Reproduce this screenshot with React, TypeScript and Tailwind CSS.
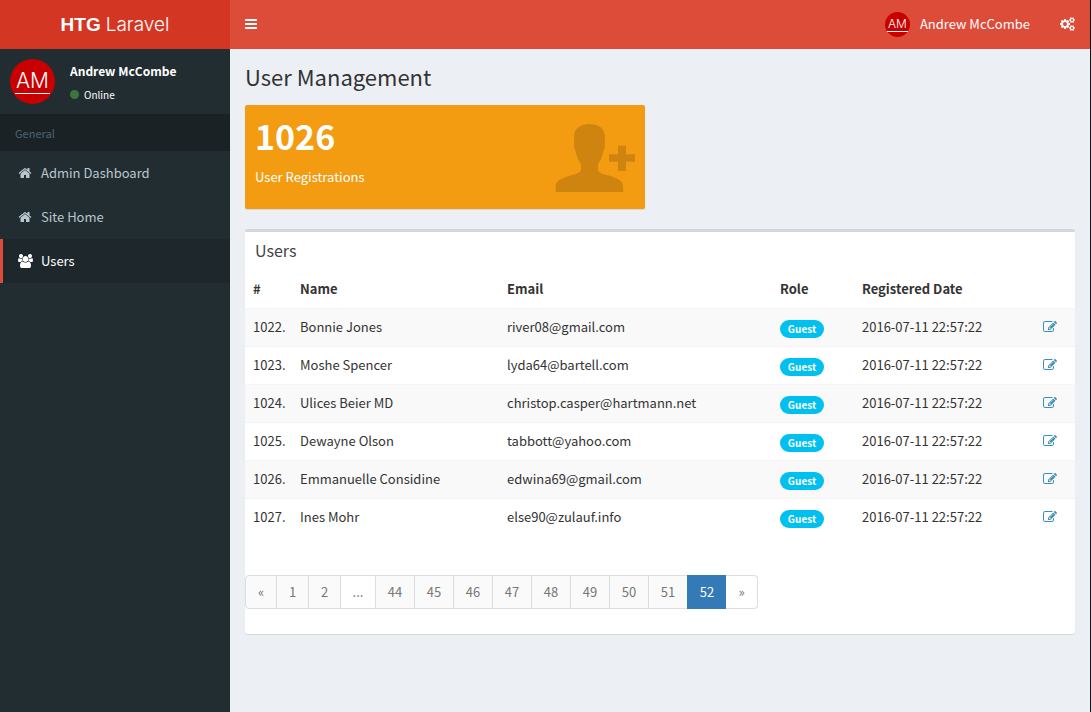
import React from "react";

const ICONS = {
  bars: {
    box: "128 0 1536 1792",
    d: "M1664 1344v128q0 26-19 45t-45 19h-1408q-26 0-45-19t-19-45v-128q0-26 19-45t45-19h1408q26 0 45 19t19 45zm0-512v128q0 26-19 45t-45 19h-1408q-26 0-45-19t-19-45v-128q0-26 19-45t45-19h1408q26 0 45 19t19 45zm0-512v128q0 26-19 45t-45 19h-1408q-26 0-45-19t-19-45v-128q0-26 19-45t45-19h1408q26 0 45 19t19 45z",
  },
  home: {
    box: "0 0 1792 1792",
    d: "M1472 992v480q0 26-19 45t-45 19h-384v-384h-256v384h-384q-26 0-45-19t-19-45v-480q0-1 .5-3t.5-3l575-474 575 474q1 2 1 6zm223-69l-62 74q-8 9-21 11h-3q-13 0-21-7l-692-577-692 577q-12 8-24 7-13-2-21-11l-62-74q-8-10-7-23.5t11-21.5l719-599q32-26 76-26t76 26l244 204v-195q0-14 9-23t23-9h192q14 0 23 9t9 23v408l219 182q10 8 11 21.5t-7 23.5z",
  },
  users: {
    box: "-64 0 1920 1792",
    d: "M529 896q-162 5-265 128h-134q-82 0-138-40.5t-56-118.5q0-353 124-353 6 0 43.5 21t97.5 42.5 119 21.5q67 0 133-23-5 37-5 66 0 139 81 256zm1071 637q0 120-73 189.5t-194 69.5h-874q-121 0-194-69.5t-73-189.5q0-53 3.5-103.5t14-109 26.5-108.5 43-97.5 62-81 85.5-53.5 111.5-20q10 0 43 21.5t73 48 107 48 135 21.5 135-21.5 107-48 73-48 43-21.5q61 0 111.5 20t85.5 53.5 62 81 43 97.5 26.5 108.5 14 109 3.5 103.5zm-1024-1277q0 106-75 181t-181 75-181-75-75-181 75-181 181-75 181 75 75 181zm704 384q0 159-112.5 271.5t-271.5 112.5-271.5-112.5-112.5-271.5 112.5-271.5 271.5-112.5 271.5 112.5 112.5 271.5zm576 225q0 78-56 118.5t-138 40.5h-134q-103-123-265-128 81-117 81-256 0-29-5-66 66 23 133 23 59 0 119-21.5t97.5-42.5 43.5-21q124 0 124 353zm-128-609q0 106-75 181t-181 75-181-75-75-181 75-181 181-75 181 75 75 181z",
  },
  edit: {
    box: "0 0 1792 1792",
    d: "M888 1184l116-116-152-152-116 116v56h96v96h56zm440-720q-16-16-33 1l-350 350q-17 17-1 33t33-1l350-350q17-17 1-33zm80 594v190q0 119-84.5 203.5t-203.5 84.5h-832q-119 0-203.5-84.5t-84.5-203.5v-832q0-119 84.5-203.5t203.5-84.5h832q63 0 117 25 15 7 18 23 3 17-9 29l-49 49q-14 14-32 8-23-6-45-6h-832q-66 0-113 47t-47 113v832q0 66 47 113t113 47h832q66 0 113-47t47-113v-126q0-13 9-22l64-64q15-15 35-7t20 29zm-96-738l288 288-672 672h-288v-288zm444 132l-92 92-288-288 92-92q28-28 68-28t68 28l152 152q28 28 28 68t-28 68z",
  },
  cogs: {
    box: "-64 0 1920 1792",
    d: "M832 896q0-106-75-181t-181-75-181 75-75 181 75 181 181 75 181-75 75-181zm768 512q0-52-38-90t-90-38-90 38-38 90q0 53 37.5 90.5t90.5 37.5 90.5-37.5 37.5-90.5zm0-1024q0-52-38-90t-90-38-90 38-38 90q0 53 37.5 90.5t90.5 37.5 90.5-37.5 37.5-90.5zm-384 421v185q0 10-7 19.5t-16 10.5l-155 24q-11 35-32 76 34 48 90 115 7 11 7 20 0 12-7 19-23 30-82.5 89.5t-78.5 59.5q-11 0-21-7l-115-90q-37 19-77 31-11 108-23 155-7 24-30 24h-186q-11 0-20-7.5t-10-17.5l-23-153q-34-10-75-31l-118 89q-7 7-20 7-11 0-21-8-144-133-144-160 0-9 7-19 10-14 41-53t47-61q-23-44-35-82l-152-24q-10-1-17-9.5t-7-19.5v-185q0-10 7-19.5t16-10.5l155-24q11-35 32-76-34-48-90-115-7-11-7-20 0-12 7-20 22-30 82-89t79-59q11 0 21 7l115 90q34-18 77-32 11-108 23-154 7-24 30-24h186q11 0 20 7.5t10 17.5l23 153q34 10 75 31l118-89q8-7 20-7 11 0 21 8 144 133 144 160 0 8-7 19-12 16-42 54t-45 60q23 48 34 82l152 23q10 2 17 10.5t7 19.5zm640 533v140q0 16-149 31-12 27-30 52 51 113 51 138 0 4-4 7-122 71-124 71-8 0-46-47t-52-68q-20 2-30 2t-30-2q-14 21-52 68t-46 47q-2 0-124-71-4-3-4-7 0-25 51-138-18-25-30-52-149-15-149-31v-140q0-16 149-31 13-29 30-52-51-113-51-138 0-4 4-7 4-2 35-20t59-34 30-16q8 0 46 46.5t52 67.5q20-2 30-2t30 2q51-71 92-112l6-2q4 0 124 70 4 3 4 7 0 25-51 138 17 23 30 52 149 15 149 31zm0-1024v140q0 16-149 31-12 27-30 52 51 113 51 138 0 4-4 7-122 71-124 71-8 0-46-47t-52-68q-20 2-30 2t-30-2q-14 21-52 68t-46 47q-2 0-124-71-4-3-4-7 0-25 51-138-18-25-30-52-149-15-149-31v-140q0-16 149-31 13-29 30-52-51-113-51-138 0-4 4-7 4-2 35-20t59-34 30-16q8 0 46 46.5t52 67.5q20-2 30-2t30 2q51-71 92-112l6-2q4 0 124 70 4 3 4 7 0 25-51 138 17 23 30 52 149 15 149 31z",
  },
};

type IconName = keyof typeof ICONS;

function Icon({ name, className }: { name: IconName; className: string }) {
  return (
    <svg viewBox={ICONS[name].box} className={className} fill="currentColor" aria-hidden="true">
      <path d={ICONS[name].d} />
    </svg>
  );
}

function PersonAdd() {
  return (
    <svg viewBox="-2 0 240 204" className="h-[68px] w-20 shrink-0 text-black/15" fill="currentColor" aria-hidden="true">
      <path d="M101 0C126 0 148 12 148 38L147 54C150 60 147 75 143 82C140 102 132 112 127 122V137C131 150 148 150 171 158C190 165 201 172 202 184L203 204H0V184C2 172 12 165 33 158C56 150 72 149 76 137V122C71 112 63 102 60 82C56 75 53 60 56 54L55 38C55 12 77 0 101 0Z" />
      <path d="M187 65h24v26h27v22h-27v28h-24v-28h-27v-22h27z" />
    </svg>
  );
}

const NAV: { label: string; icon: IconName; active?: boolean }[] = [
  { label: "Admin Dashboard", icon: "home" },
  { label: "Site Home", icon: "home" },
  { label: "Users", icon: "users", active: true },
];

const USERS = [
  { id: 1022, name: "Bonnie Jones", email: "river08@gmail.com" },
  { id: 1023, name: "Moshe Spencer", email: "lyda64@bartell.com" },
  { id: 1024, name: "Ulices Beier MD", email: "christop.casper@hartmann.net" },
  { id: 1025, name: "Dewayne Olson", email: "tabbott@yahoo.com" },
  { id: 1026, name: "Emmanuelle Considine", email: "edwina69@gmail.com" },
  { id: 1027, name: "Ines Mohr", email: "else90@zulauf.info" },
];

const PAGES = ["«", "1", "2", "...", "44", "45", "46", "47", "48", "49", "50", "51", "52", "»"];

function pageClass(page: string) {
  const base = "flex h-[34px] items-center justify-center border ";
  if (page === "52") return base + "w-10 border-[#337ab7] bg-[#337ab7] text-white";
  if (page === "...") return base + "w-9 border-[#ddd] bg-white text-[#777]";
  if (page === "«") return base + "w-8 rounded-l border-[#ddd] bg-[#fafafa] text-[#777]";
  if (page === "»") return base + "w-8 rounded-r border-l-0 border-[#ddd] bg-white text-[#777]";
  if (page.length === 1) return base + "w-[33px] border-[#ddd] bg-[#fafafa] text-[#777]";
  return base + "w-10 border-[#ddd] bg-[#fafafa] text-[#777]";
}

export default function App() {
  return (
    <div className="flex min-h-screen flex-col border-r border-[#06181d] bg-[#ecf0f5] font-['Noto_Sans_CJK_SC',sans-serif] text-[13px] leading-5 text-[#333]">
      <header className="flex h-[49px] text-white">
        <a href="#" className="flex w-[230px] shrink-0 items-baseline justify-center gap-[5px] bg-[#d33724] pt-[13px] font-['Liberation_Sans',sans-serif] text-[19px] leading-6">
          <b>HTG</b>
          <span className="font-['Inter',sans-serif] text-[19px] font-light">Laravel</span>
        </a>
        <nav className="flex grow items-center justify-between bg-[#dd4b39] px-[15px] pb-px">
          <button aria-label="Toggle navigation">
            <Icon name="bars" className="h-3.5 w-3" />
          </button>
          <div className="flex items-center gap-[30px]">
            <a href="#" className="flex items-center gap-2.5">
              <span className="flex size-[25px] items-center justify-center rounded-full bg-[#c80000]">
                <span className="border-b border-white px-px font-['Inter',sans-serif] text-[12px] leading-[14px] font-light">AM</span>
              </span>
              <span>Andrew McCombe</span>
            </a>
            <button aria-label="Settings">
              <Icon name="cogs" className="h-3.5 w-[15px]" />
            </button>
          </div>
        </nav>
      </header>

      <div className="flex grow">
        <aside className="w-[230px] shrink-0 bg-[#222d32]">
          <div className="flex h-[65px] items-center gap-[15px] px-2.5 text-white">
            <span className="flex size-[45px] items-center justify-center rounded-full bg-[#c80000]">
              <span className="border-b border-white px-px font-['Inter',sans-serif] text-[21px] leading-[24px] font-light">AM</span>
            </span>
            <div className="flex flex-col gap-1 pt-0.5">
              <p className="text-[12px] font-semibold">Andrew McCombe</p>
              <a href="#" className="flex items-center gap-[5px] text-[10px]">
                <span className="size-[9px] rounded-full bg-[#3c763d]" />
                Online
              </a>
            </div>
          </div>
          <div className="flex h-[37px] items-center bg-[#1a2226] px-[15px] text-[11px] text-[#4b646f]">General</div>
          <ul>
            {NAV.map((item) => (
              <li key={item.label}>
                <a
                  href="#"
                  className={
                    item.active
                      ? "flex h-11 items-center border-l-3 border-[#dd4b39] bg-[#1e282c] px-[15px] text-white"
                      : "flex h-11 items-center border-l-3 border-transparent px-[15px] text-[#b8c7ce]"
                  }
                >
                  <span className="w-[23px]">
                    <Icon name={item.icon} className={item.icon === "users" ? "h-3.5 w-[15px]" : "size-3.5"} />
                  </span>
                  {item.label}
                </a>
              </li>
            ))}
          </ul>
        </aside>

        <main className="grow px-[15px] pt-3.5">
          <h1 className="text-[22px] leading-[26px]">User Management</h1>

          <section className="mt-4 flex h-[104px] w-[400px] max-w-full items-start justify-between rounded-xs bg-[#f39c12] px-2.5 shadow-[0_1px_1px_rgba(0,0,0,0.1)]">
            <div className="pt-2.5 text-white">
              <h3 className="text-[34px] leading-[42px] font-bold">1026</h3>
              <p className="mt-2 text-[13px] leading-6">User Registrations</p>
            </div>
            <div className="pt-[19px]">
              <PersonAdd />
            </div>
          </section>

          <section className="mt-5 rounded-[3px] border-t-3 border-[#d2d6de] bg-white pb-[25px] shadow-[0_1px_1px_rgba(0,0,0,0.1)]">
            <h2 className="px-2.5 pt-2 pb-2.5 text-base leading-5 text-[#444]">Users</h2>
            <table className="w-full table-fixed border-collapse text-left">
              <colgroup>
                <col className="w-[47px]" />
                <col className="w-[207px]" />
                <col />
                <col className="w-[82px]" />
                <col className="w-[181px]" />
                <col className="w-10" />
              </colgroup>
              <thead>
                <tr className="h-[38px]">
                  <th className="px-2">#</th>
                  <th className="px-2">Name</th>
                  <th className="px-2">Email</th>
                  <th className="px-2">Role</th>
                  <th className="px-2">Registered Date</th>
                  <th className="px-2" aria-label="Actions" />
                </tr>
              </thead>
              <tbody>
                {USERS.map((user) => (
                  <tr key={user.id} className="h-[38px] border-t border-[#f4f4f4] odd:bg-[#f9f9f9]">
                    <td className="px-2">{user.id}.</td>
                    <td className="px-2">{user.name}</td>
                    <td className="px-2">{user.email}</td>
                    <td className="px-2">
                      <span className="mt-1 flex h-[18px] w-11 items-center justify-center rounded-full bg-[#00c0ef] text-[10px] font-bold text-white">
                        Guest
                      </span>
                    </td>
                    <td className="px-2">2016-07-11 22:57:22</td>
                    <td className="px-2">
                      <a href="#" aria-label={`Edit ${user.name}`} className="block text-[#3c8dbc]">
                        <Icon name="edit" className="size-3.5" />
                      </a>
                    </td>
                  </tr>
                ))}
              </tbody>
            </table>
            <nav aria-label="Pagination" className="mt-[39px]">
              <ul className="flex -space-x-px">
                {PAGES.map((page) => (
                  <li key={page}>
                    {page === "..." ? (
                      <span className={pageClass(page)}>{page}</span>
                    ) : (
                      <a href="#" className={pageClass(page)}>
                        {page}
                      </a>
                    )}
                  </li>
                ))}
              </ul>
            </nav>
          </section>
        </main>
      </div>
    </div>
  );
}
